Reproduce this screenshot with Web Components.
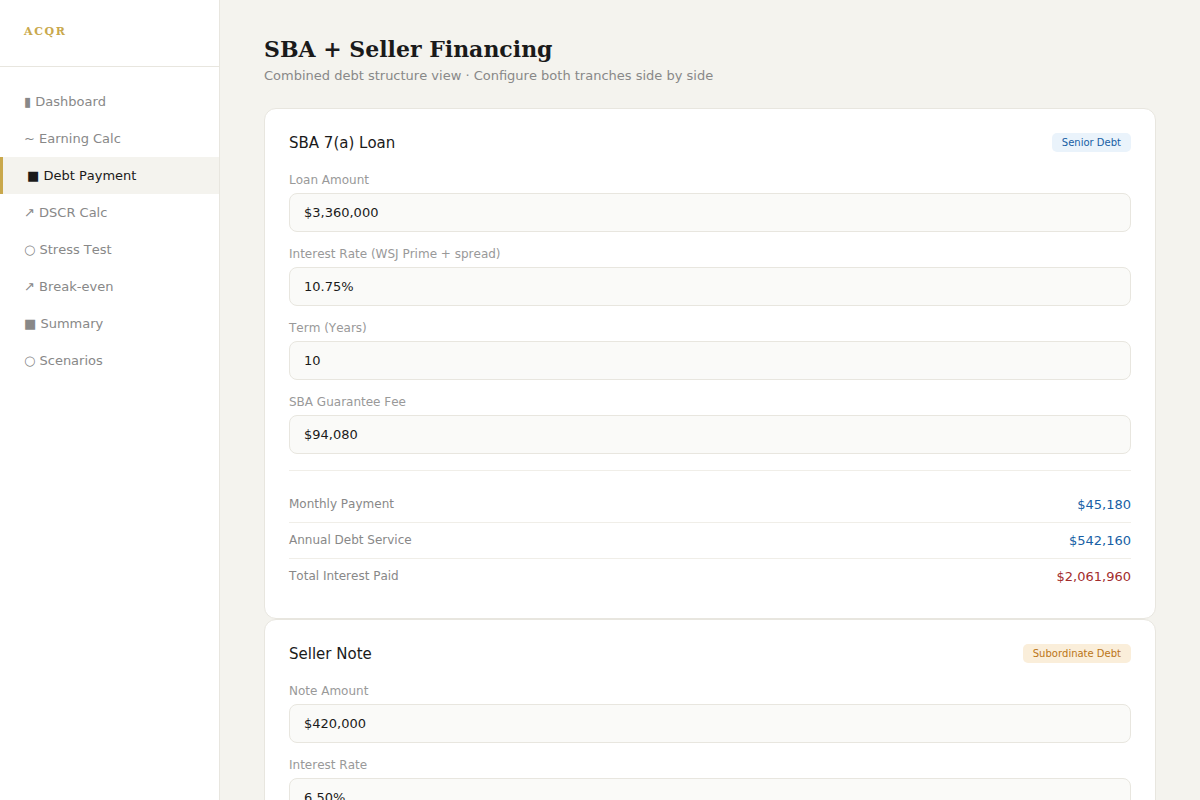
<!DOCTYPE html>
<html lang="en">
<head>
<meta charset="utf-8">
<meta name="viewport" content="width=device-width, initial-scale=1">
<title>ACQR – SBA + Seller Financing</title>
<style>
  :root {
    --ink: #1a1a1a;
    --muted: #888;
    --label: #999;
    --gold: #c9a84c;
    --line: #e8e6df;
    --line-soft: #f0eee8;
    --page: #f4f3ee;
    --field: #fafaf8;
    --blue: #185fa5;
    --red: #a32d2d;
  }
  body {
    margin: 0;
    background: var(--page);
    color: var(--ink);
    font: 13px/15px "DejaVu Sans", sans-serif;
    font-kerning: none;
  }
</style>
</head>
<body>
<acqr-app>
  <side-nav slot="nav" brand="ACQR">
    <nav-item icon="▮">Dashboard</nav-item>
    <nav-item icon="~">Earning Calc</nav-item>
    <nav-item icon="■" active>Debt Payment</nav-item>
    <nav-item icon="↗">DSCR Calc</nav-item>
    <nav-item icon="○">Stress Test</nav-item>
    <nav-item icon="↗">Break-even</nav-item>
    <nav-item icon="■">Summary</nav-item>
    <nav-item icon="○">Scenarios</nav-item>
  </side-nav>
  <page-header>
    SBA + Seller Financing
    <span slot="subtitle">Combined debt structure view · Configure both tranches side by side</span>
  </page-header>
  <debt-card heading="SBA 7(a) Loan">
    <debt-badge slot="badge" tone="senior">Senior Debt</debt-badge>
    <form-field label="Loan Amount" value="$3,360,000"></form-field>
    <form-field label="Interest Rate (WSJ Prime + spread)" value="10.75%"></form-field>
    <form-field label="Term (Years)" value="10"></form-field>
    <form-field label="SBA Guarantee Fee" value="$94,080"></form-field>
    <result-list slot="results">
      <result-row label="Monthly Payment">$45,180</result-row>
      <result-row label="Annual Debt Service">$542,160</result-row>
      <result-row label="Total Interest Paid" tone="cost">$2,061,960</result-row>
    </result-list>
  </debt-card>
  <debt-card heading="Seller Note">
    <debt-badge slot="badge" tone="subordinate">Subordinate Debt</debt-badge>
    <form-field label="Note Amount" value="$420,000"></form-field>
    <form-field label="Interest Rate" value="6.50%"></form-field>
  </debt-card>
</acqr-app>

<script>
  // Base class: clones the markup of the subclass into an open shadow root.
  class ShadowElement extends HTMLElement {
    constructor() {
      super();
      const template = document.createElement('template');
      template.innerHTML = this.constructor.markup;
      this.attachShadow({ mode: 'open' }).append(template.content.cloneNode(true));
    }
    part$(selector) { return this.shadowRoot.querySelector(selector); }
  }

  customElements.define('acqr-app', class extends ShadowElement {
    static markup = `
      <style>
        :host { display: flex; min-height: 100vh; }
        main { flex: 1; min-width: 0; padding: 36px 44px; }
      </style>
      <slot name="nav"></slot>
      <main><slot></slot></main>`;
  });

  customElements.define('side-nav', class extends ShadowElement {
    static markup = `
      <style>
        :host {
          display: block; box-sizing: border-box; flex: 0 0 220px;
          background: #fff; border-right: 1px solid var(--line);
        }
        .brand {
          padding: 24px 24px 26px; border-bottom: 1px solid var(--line); color: var(--gold);
          font-family: "DejaVu Serif", serif; font-weight: bold; font-size: 11px;
          line-height: 16px; letter-spacing: 0.15em;
        }
        nav { padding: 16px 0; }
      </style>
      <div class="brand"></div>
      <nav aria-label="Main"><slot></slot></nav>`;
    connectedCallback() { this.part$('.brand').textContent = this.getAttribute('brand'); }
  });

  customElements.define('nav-item', class extends ShadowElement {
    static markup = `
      <style>
        :host { display: block; }
        a { display: block; padding: 11px 24px; color: var(--muted); text-decoration: none; }
        :host([active]) a {
          color: var(--ink); background: var(--page); border-left: 3px solid var(--gold);
        }
      </style>
      <a href="#"><span class="icon"></span> <slot></slot></a>`;
    connectedCallback() {
      this.part$('.icon').textContent = this.getAttribute('icon');
      if (this.hasAttribute('active')) this.part$('a').setAttribute('aria-current', 'page');
    }
  });

  customElements.define('page-header', class extends ShadowElement {
    static markup = `
      <style>
        :host { display: block; margin-bottom: 25px; }
        h1 {
          margin: 0 0 6px; font-family: "DejaVu Serif", serif;
          font-size: 22px; line-height: 26px; font-weight: bold;
        }
        p { margin: 0; color: var(--muted); }
      </style>
      <h1><slot></slot></h1>
      <p><slot name="subtitle"></slot></p>`;
  });

  customElements.define('debt-card', class extends ShadowElement {
    static markup = `
      <style>
        :host {
          display: block; padding: 24px;
          background: #fff; border: 1px solid var(--line); border-radius: 12px;
        }
        header { display: flex; align-items: center; justify-content: space-between; margin-bottom: 20px; }
        h2 { margin: 0; font-size: 15px; line-height: 18px; font-weight: 400; }
        .fields { display: grid; gap: 14px; }
      </style>
      <header><h2></h2><slot name="badge"></slot></header>
      <div class="fields"><slot></slot></div>
      <slot name="results"></slot>`;
    connectedCallback() { this.part$('h2').textContent = this.getAttribute('heading'); }
  });

  customElements.define('debt-badge', class extends ShadowElement {
    static markup = `
      <style>
        :host { display: block; padding: 3px 10px; border-radius: 5px; font-size: 10px; line-height: 13px; }
        :host([tone="senior"]) { color: var(--blue); background: #eaf3fb; }
        :host([tone="subordinate"]) { color: #ba7517; background: #faeeda; }
      </style>
      <slot></slot>`;
  });

  customElements.define('form-field', class extends ShadowElement {
    static markup = `
      <style>
        :host { display: block; }
        label { display: block; margin-bottom: 5px; color: var(--label); font-size: 12px; line-height: 16px; }
        input {
          display: block; box-sizing: border-box; width: 100%; margin: 0; padding: 11px 14px;
          border: 1px solid var(--line); border-radius: 8px;
          background: var(--field); color: var(--ink); font: inherit; font-kerning: inherit;
        }
        input:focus { outline: none; border-color: var(--gold); }
      </style>
      <label for="control"></label>
      <input id="control" type="text">`;
    connectedCallback() {
      this.part$('label').textContent = this.getAttribute('label');
      this.part$('input').value = this.getAttribute('value');
    }
  });

  customElements.define('result-list', class extends ShadowElement {
    static markup = `
      <style>
        :host { display: block; margin-top: 16px; padding-top: 16px; border-top: 1px solid var(--line-soft); }
      </style>
      <slot></slot>`;
  });

  customElements.define('result-row', class extends ShadowElement {
    static markup = `
      <style>
        :host {
          display: flex; justify-content: space-between; padding: 10px 0;
          border-bottom: 1px solid var(--line-soft);
        }
        :host(:last-child) { border-bottom: 0; }
        .label { color: var(--muted); font-size: 12px; }
        .value { color: var(--blue); }
        :host([tone="cost"]) .value { color: var(--red); }
      </style>
      <span class="label"></span>
      <span class="value"><slot></slot></span>`;
    connectedCallback() { this.part$('.label').textContent = this.getAttribute('label'); }
  });
</script>
</body>
</html>
